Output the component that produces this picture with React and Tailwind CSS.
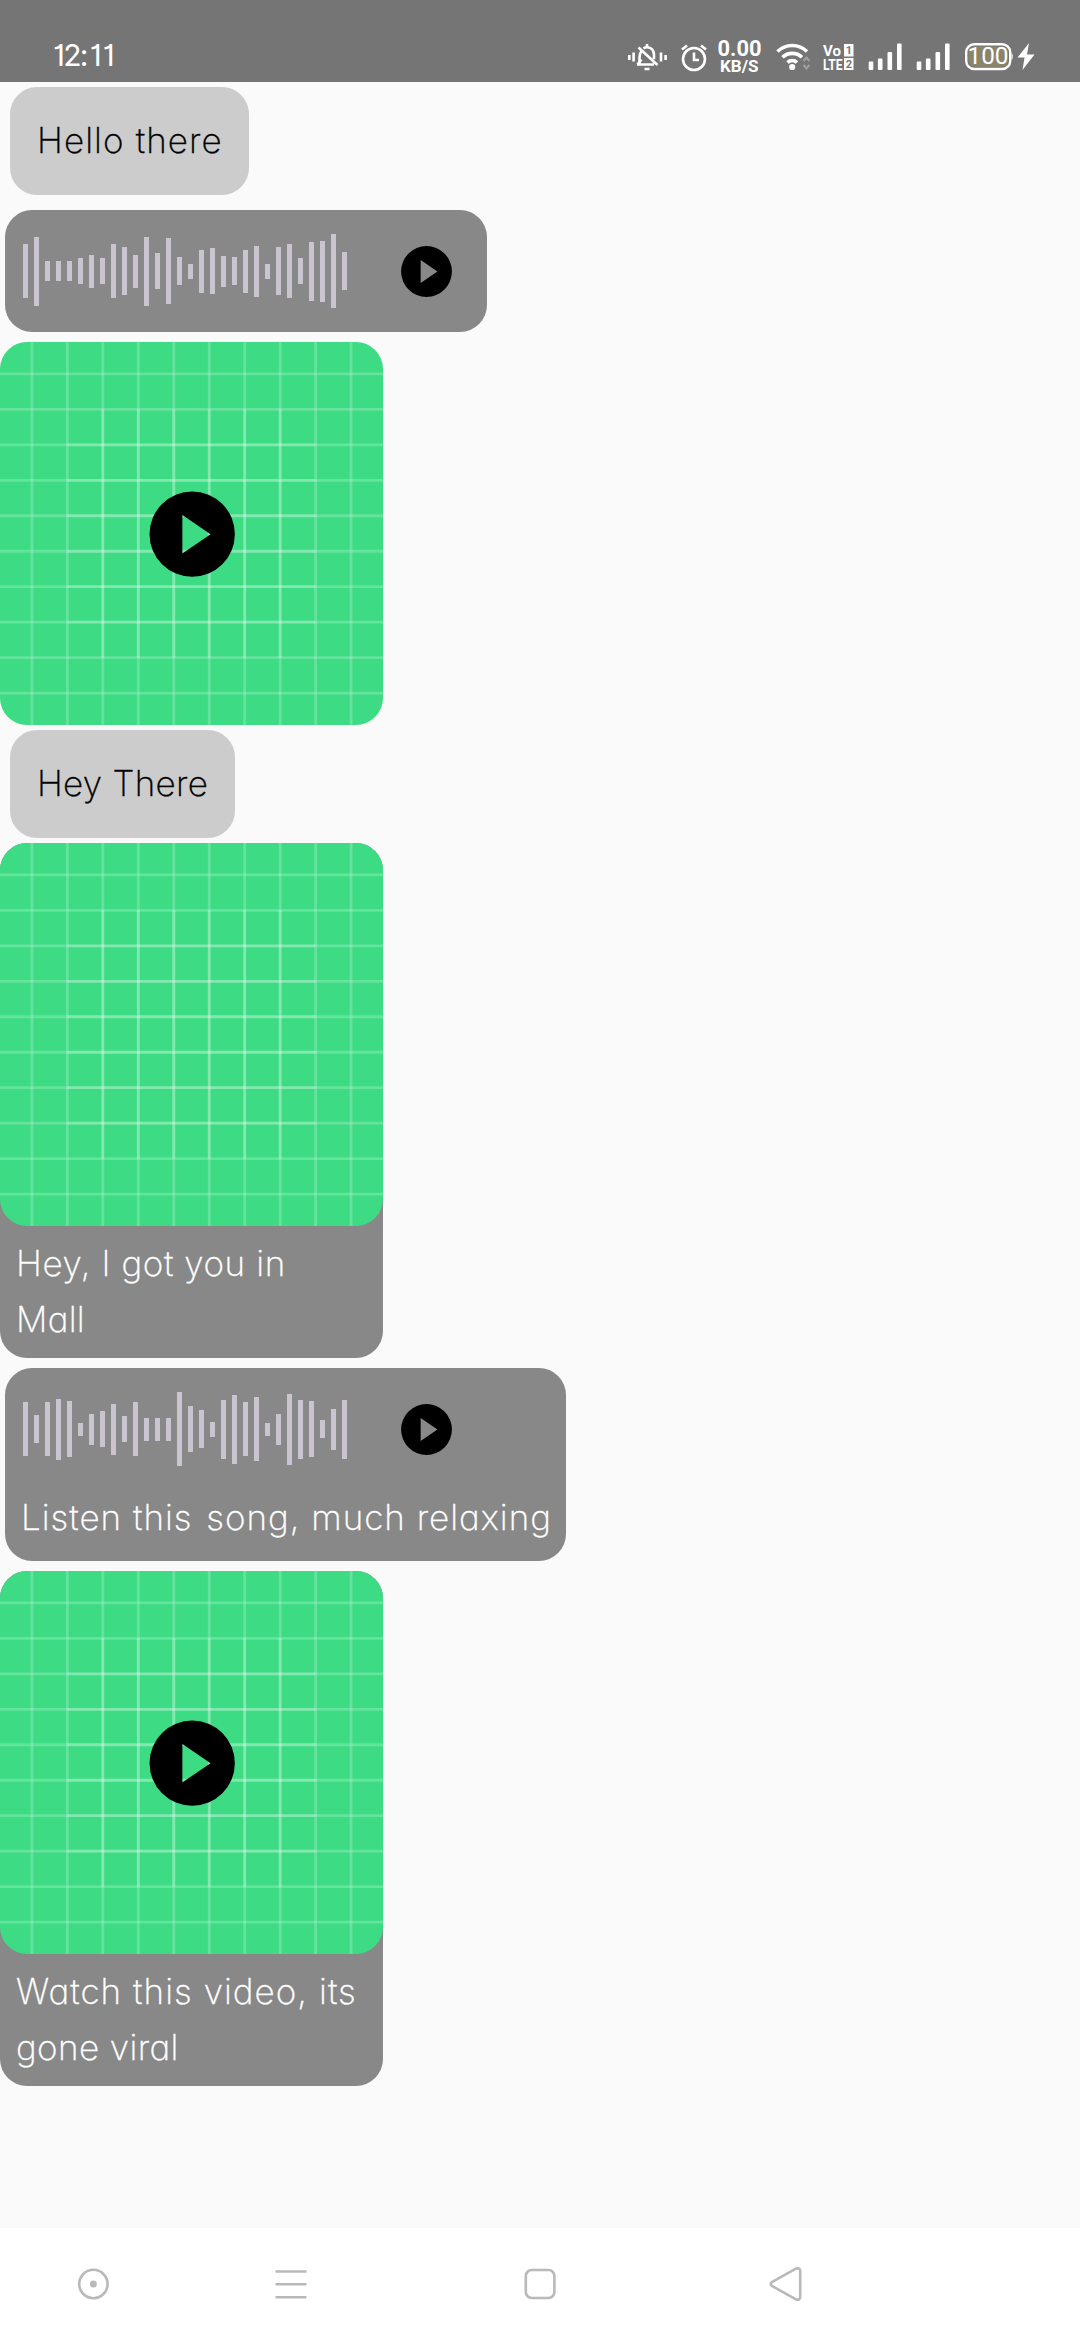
import React from "react";

const WAVE_A = [54, 69, 20, 20, 20, 26, 33, 26, 54, 48, 33, 69, 36, 66, 28, 15, 43, 46, 31, 28, 43, 51, 15, 48, 54, 26, 59, 61, 74, 38];
const WAVE_B = [54, 28, 54, 61, 56, 13, 31, 36, 51, 26, 54, 23, 23, 23, 74, 46, 38, 15, 59, 69, 54, 64, 13, 31, 71, 59, 56, 18, 41, 59];
const LINES = [9, 19, 29, 39, 49, 59, 69, 79, 89, 99];
const INNER = [29, 39, 49, 59, 69, 79];

function PlayIcon({ className }) {
  return (
    <svg viewBox="0 0 24 24" className={className}>
      <path fill="#000" fillRule="evenodd" d="M12 2a10 10 0 1 0 0 20 10 10 0 0 0 0-20zM9.7 16.500v-9l6.600 4.500z" />
    </svg>
  );
}

function Thumbnail({ video }) {
  return (
    <div className="relative h-[383px] w-[383px] overflow-hidden rounded-[27px]">
      <svg viewBox="0 0 108 108" className="block h-full w-full">
        <rect width="108" height="108" fill="#3ddc84" />
        <g stroke="#fff" strokeOpacity="0.2" strokeWidth="0.8">
          {LINES.map((n) => (
            <path key={n} d={`M${n} 0V108`} />
          ))}
          {LINES.map((n) => (
            <path key={n} d={`M0 ${n}H108`} />
          ))}
          {INNER.map((n) => (
            <path key={n} d={`M19 ${n}H89`} />
          ))}
          {INNER.map((n) => (
            <path key={n} d={`M${n} 19V89`} />
          ))}
        </g>
      </svg>
      {video && (
        <div className="absolute inset-0 flex items-center justify-center pl-px pt-px">
          <PlayIcon className="h-[102.4px] w-[102.4px]" />
        </div>
      )}
    </div>
  );
}

function Wave({ bars }) {
  return (
    <div className="flex h-[122px] items-center">
      <div className="ml-[18px] flex items-center gap-[6px]">
        {bars.map((h, i) => (
          <div key={i} className="w-[5px] bg-[#cac4d0]" style={{ height: h }} />
        ))}
      </div>
      <PlayIcon className="ml-[49px] h-[61px] w-[61px]" />
    </div>
  );
}

function StatusBar() {
  return (
    <header className="flex h-[82px] items-start bg-[#757575] font-['Roboto'] text-white">
      <div className="ml-[53px] mt-[36px] flex w-[70px] font-['Inter',sans-serif] text-[30px] leading-[38px]" style={{ fontFeatureSettings: '"cv01"' }}>
        <span className="tracking-[-1.7px]">12</span>
        <span className="tracking-[1.2px]">:11</span>
      </div>
      <svg viewBox="620 36 440 40" className="ml-[497px] mt-[36px] h-[40px] w-[440px]" fill="none" stroke="#fff">
        {/* muted bell with vibration marks */}
        <g strokeWidth="2.6">
          <path d="M629.3 55v5M633.6 52.500v9M661 52.500v9M665.600 55v5" />
          <path d="M637 64.500h17M639.500 64v-4.500q0-6 2-8.500M643.500 48.500c1-.8 2.200-1.200 3.500-1.200 4.800 0 7 3.600 7 8v4" />
          <path d="M637.500 64.500l4-5M638.500 47.500l19 17.500" />
          <path d="M647 44v4M644.500 69h5" />
        </g>
        {/* alarm clock */}
        <circle cx="694" cy="59" r="11" strokeWidth="2.600" />
        <path strokeWidth="2.600" d="M694 52.500v7.500h5M682 49.500l5-4M706 49.500l-5-4" />
        <g fill="#fff" stroke="none" fontFamily="Roboto" fontWeight="700">
          <text x="717.500" y="56.300" fontSize="22.500" textLength="44" lengthAdjust="spacingAndGlyphs">0.00</text>
          <text x="720" y="72" fontSize="16.500" textLength="38.500" lengthAdjust="spacingAndGlyphs">KB/S</text>
        </g>
        {/* wifi */}
        <g strokeWidth="3.600">
          <path d="M777.500 51.500a21 21 0 0 1 29.500 0" />
          <path d="M782.500 57.300a14 14 0 0 1 19.500 0" />
          <path d="M787.500 62.500a7 7 0 0 1 9.500 0" />
        </g>
        <circle cx="792.200" cy="67" r="3.100" fill="#fff" stroke="none" />
        <path stroke="#a0a0a0" strokeWidth="2" d="M803.500 61l3-3.500 3 3.500M803.500 65l3 3.500 3-3.500" />
        <g fill="#fff" stroke="none" fontFamily="Roboto" fontWeight="700">
          <text x="823" y="55.500" fontSize="15" textLength="18" lengthAdjust="spacingAndGlyphs">Vo</text>
          <text x="823" y="69.600" fontSize="15" textLength="19.500" lengthAdjust="spacingAndGlyphs">LTE</text>
          <rect x="844" y="44" width="9.500" height="12.500" />
          <rect x="844" y="58" width="9.500" height="12" />
          <g fill="#757575" fontSize="11">
            <text x="845.800" y="54.200">1</text>
            <text x="845.700" y="68">2</text>
          </g>
          {[868.700, 916.700].map((x) => (
            <g key={x}>
              <rect x={x} y="61.500" width="4.600" height="8.500" rx="1" />
              <rect x={x + 9.200} y="58.500" width="4.600" height="11.500" rx="1" />
              <rect x={x + 18.800} y="52" width="4.600" height="18" rx="1" />
              <rect x={x + 28.300} y="43.500" width="4.600" height="26.500" rx="1" />
            </g>
          ))}
        </g>
        {/* battery */}
        <rect x="966.200" y="44.200" width="44" height="24.800" rx="8" strokeWidth="2.400" />
        <rect x="968.500" y="46.500" width="39.500" height="20.200" rx="5.500" fill="#8b8468" stroke="none" />
        <path d="M1011.500 52.500q2.500 4 0 8z" fill="#fff" stroke="none" />
        <text x="967.500" y="64.400" fill="#fff" stroke="none" fontFamily="Roboto" fontSize="24.500" textLength="41" lengthAdjust="spacingAndGlyphs">100</text>
        <path fill="#fff" stroke="none" d="M1029 43l-11.500 14.500h7L1022.500 70l12-15.500h-7.500z" />
      </svg>
    </header>
  );
}

export default function App() {
  return (
    <div className="flex h-[2340px] w-[1080px] flex-col overflow-hidden bg-[#fafafa] font-['Inter',sans-serif]">
      <StatusBar />
      <main className="flex flex-1 flex-col items-start whitespace-nowrap text-[35px] leading-[56px] font-extralight [-webkit-text-stroke:0.35px_currentColor]" style={{ fontFeatureSettings: '"cv11"' }}>
        <div className="ml-[10px] mt-[5px] h-[108px] w-[239px] rounded-[27px] bg-[#ccc] pl-[27px] pt-[25px] tracking-[1.1px] text-black">Hello there</div>

        <div className="ml-[5px] mt-[15px] h-[122px] w-[482px] rounded-[27px] bg-[#888]">
          <Wave bars={WAVE_A} />
        </div>

        <div className="mt-[10px]">
          <Thumbnail video />
        </div>

        <div className="ml-[10px] mt-[5px] h-[108px] w-[225px] rounded-[27px] bg-[#ccc] pl-[27px] pt-[25px] tracking-[0.3px] text-black">Hey There</div>

        <div className="mt-[5px] h-[515px] w-[383px] rounded-[27px] bg-[#888] text-white">
          <Thumbnail />
          <div className="pl-[16px] pt-[9px]">
            <div className="tracking-[0.6px]">Hey, I got you in</div>
            <div className="tracking-[0.3px]">Mall</div>
          </div>
        </div>

        <div className="ml-[5px] mt-[10px] h-[193px] w-[561px] rounded-[27px] bg-[#888] text-white">
          <Wave bars={WAVE_B} />
          <div className="-mt-[1px] pl-[16px] tracking-[1px]">Listen this <span className="ml-[3px]">song, much relaxing</span></div>
        </div>

        <div className="mt-[10px] h-[515px] w-[383px] rounded-[27px] bg-[#888] text-white">
          <Thumbnail video />
          <div className="pl-[16px] pt-[9px]">
            <div className="tracking-[1.05px]">Watch this video, its</div>
            <div className="tracking-[0.4px]">gone viral</div>
          </div>
        </div>
      </main>

      <nav className="flex h-[112px] items-start bg-white pt-[38px]">
        <svg viewBox="0 0 36 36" className="ml-[75px] h-[36px] w-[36px]" fill="none" stroke="#b9b9b9" strokeWidth="2.6">
          <circle cx="18.400" cy="18" r="14.200" />
          <circle cx="18.400" cy="18" r="3.500" fill="#b9b9b9" stroke="none" />
        </svg>
        <svg viewBox="0 0 36 36" className="ml-[162px] h-[36px] w-[36px]" stroke="#b9b9b9" strokeWidth="2.6">
          <path d="M2.500 5.500h31M2.500 18.300h31M2.500 31.200h31" />
        </svg>
        <svg viewBox="0 0 36 36" className="ml-[213px] h-[36px] w-[36px]" fill="none" stroke="#b9b9b9" strokeWidth="2.6">
          <rect x="3.800" y="4" width="28.600" height="28" rx="6" />
        </svg>
        <svg viewBox="0 0 36 36" className="ml-[210px] h-[36px] w-[36px]" fill="none" stroke="#b9b9b9" strokeWidth="2.6" strokeLinejoin="round">
          <path d="M3.800 16.200L27.500 2.800Q32.200 1 32.200 5V31Q32.200 35 27.500 33.200L3.800 19.800Q1.500 18 3.800 16.200z" />
        </svg>
      </nav>
    </div>
  );
}
